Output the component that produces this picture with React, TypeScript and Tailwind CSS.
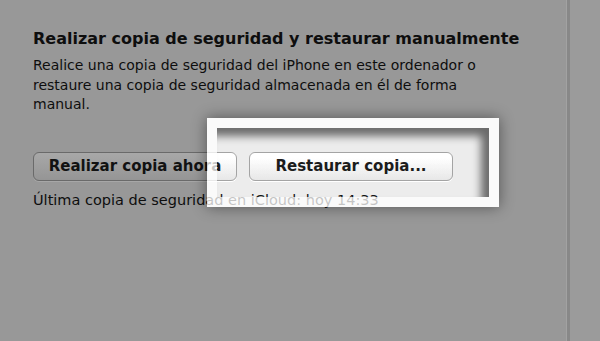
import React from 'react';

const font = { fontFamily: '"DejaVu Sans", "Liberation Sans", sans-serif' };

const Button: React.FC<{ label: string }> = ({ label }) => (
  <button className="h-[29px] w-[204px] rounded-[6px] border border-[#6a6a6a] bg-gradient-to-b from-[#a8a8a8] to-[#959595] text-[15px] font-bold leading-[27px] text-[#121212] shadow-[0_1px_0_rgba(255,255,255,0.15)]">
    {label}
  </button>
);

const App: React.FC = () => {
  return (
    <div className="relative flex h-[341px] w-[600px] overflow-hidden bg-[#989898]" style={font}>
      {/* panel izquierdo */}
      <div className="w-[566px] pl-[33px] pt-[29px] text-[#0e0e0e]">
        <h2 className="text-[16px] font-bold leading-[20px]">
          Realizar copia de seguridad y restaurar manualmente
        </h2>
        <p className="mt-[7px] text-[14px] leading-[19.5px]">
          Realice una copia de seguridad del iPhone en este ordenador o
          <br />
          restaure una copia de seguridad almacenada en él de forma
          <br />
          manual.
        </p>
        <div className="mt-[37px] flex gap-[12px]">
          <Button label="Realizar copia ahora" />
          <Button label="Restaurar copia..." />
        </div>
        <p className="mt-[9px] text-[14.5px] leading-[20px]">
          Última copia de seguridad en iCloud: hoy 14:33
        </p>
      </div>
      {/* separador */}
      <div className="w-[1px] bg-[#a2a2a2]" />
      <div className="w-[3px] bg-[#888888]" />
      <div className="flex-1 bg-[#9b9b9b]" />

      {/* resaltado sobre el botón */}
      <div className="absolute left-[207px] top-[118px] h-[89px] w-[292px] border-[10px] border-white/75 backdrop-brightness-[1.55] shadow-[0_0_14px_rgba(0,0,0,0.45)]">
        <div className="h-full w-full shadow-[inset_-8px_8px_9px_rgba(0,0,0,0.55)]" />
      </div>
    </div>
  );
};

export default App;
